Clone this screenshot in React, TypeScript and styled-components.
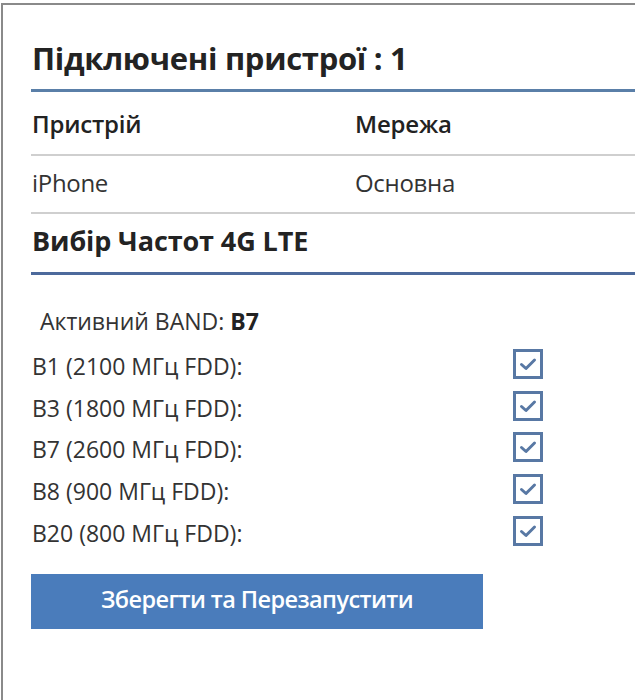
import React from "react";
import styled, { createGlobalStyle } from "styled-components";

const GlobalStyle = createGlobalStyle`
  html, body {
    margin: 0;
    padding: 0;
    background: #ffffff;
    overflow: hidden;
  }
  body {
    font-family: "Open Sans", "Noto Sans", sans-serif;
    color: #2a2a2a;
  }
`;

const Frame = styled.div`
  margin: 3px 0 0 1px;
  height: 700px;
  border-top: 2px solid #8a8a8a;
  border-left: 2px solid #8a8a8a;
  padding: 0 0 0 28px;
`;

const Title = styled.h2<{ line?: string }>`
  margin: 0;
  padding: 34px 0 12px 1px;
  font-size: 31px;
  line-height: 38px;
  font-weight: 700;
  letter-spacing: -0.3px;
  color: #232323;
  border-bottom: 3px solid ${(p) => p.line || "#5a7fa8"};
`;

const SubTitle = styled(Title)`
  padding: 10px 0 14px 1px;
  font-size: 27px;
  line-height: 34px;
  letter-spacing: -0.1px;
`;

const Row = styled.div<{ head?: boolean }>`
  display: grid;
  grid-template-columns: 323px 1fr;
  padding: 0 0 4px 1px;
  height: 58px;
  align-items: center;
  font-size: 24px;
  letter-spacing: ${(p) => (p.head ? "-0.2px" : "-0.3px")};
  font-weight: ${(p) => (p.head ? 600 : 400)};
  color: ${(p) => (p.head ? "#222" : "#333")};
  border-bottom: 2px solid #cfcfcf;
  box-sizing: border-box;
  &:first-of-type {
    height: 64px;
    padding-bottom: 0;
  }
`;

const Bands = styled.div`
  padding: 30px 0 0 1px;
  width: 511px;
`;

const Active = styled.div`
  font-size: 23px;
  padding-left: 8px;
  height: 40px;
  color: #333;
  > b {
    font-weight: 700;
    color: #222;
  }
`;

const BandRow = styled.label`
  display: flex;
  align-items: center;
  justify-content: space-between;
  height: 41.8px;
  font-size: 23px;
  color: #333;
`;

const Check = styled.span`
  width: 24px;
  height: 24px;
  border: 3px solid #5878a4;
  display: flex;
  align-items: center;
  justify-content: center;
  margin-top: -4px;
`;

const SaveButton = styled.button`
  margin-top: 20px;
  width: 452px;
  height: 55px;
  border: none;
  background: #4a7cbb;
  color: #ffffff;
  font-family: "Open Sans", sans-serif;
  font-size: 23.5px;
  font-weight: 600;
  letter-spacing: -0.6px;
  padding-bottom: 6px;
`;

const bands = [
  "B1 (2100 МГц FDD):",
  "B3 (1800 МГц FDD):",
  "B7 (2600 МГц FDD):",
  "B8 (900 МГц FDD):",
  "B20 (800 МГц FDD):",
];

function Tick() {
  return (
    <svg width="18" height="14" viewBox="0 0 18 14">
      <path d="M2.5 7.5 L7 11.5 L15.5 3" fill="none" stroke="#5878a4" strokeWidth="3" strokeLinecap="round" strokeLinejoin="round" />
    </svg>
  );
}

export default function App() {
  return (
    <>
      <GlobalStyle />
      <Frame>
        <Title>Підключені пристрої : 1</Title>
        <Row head>
          <span>Пристрій</span>
          <span>Мережа</span>
        </Row>
        <Row>
          <span>iPhone</span>
          <span>Основна</span>
        </Row>
        <SubTitle line="#4d6a9c">Вибір Частот 4G LTE</SubTitle>
        <Bands>
          <Active>
            Активний BAND: <b>B7</b>
          </Active>
          {bands.map((b) => (
            <BandRow key={b}>
              <span>{b}</span>
              <Check>
                <Tick />
              </Check>
            </BandRow>
          ))}
        </Bands>
        <SaveButton>Зберегти та Перезапустити</SaveButton>
      </Frame>
    </>
  );
}
